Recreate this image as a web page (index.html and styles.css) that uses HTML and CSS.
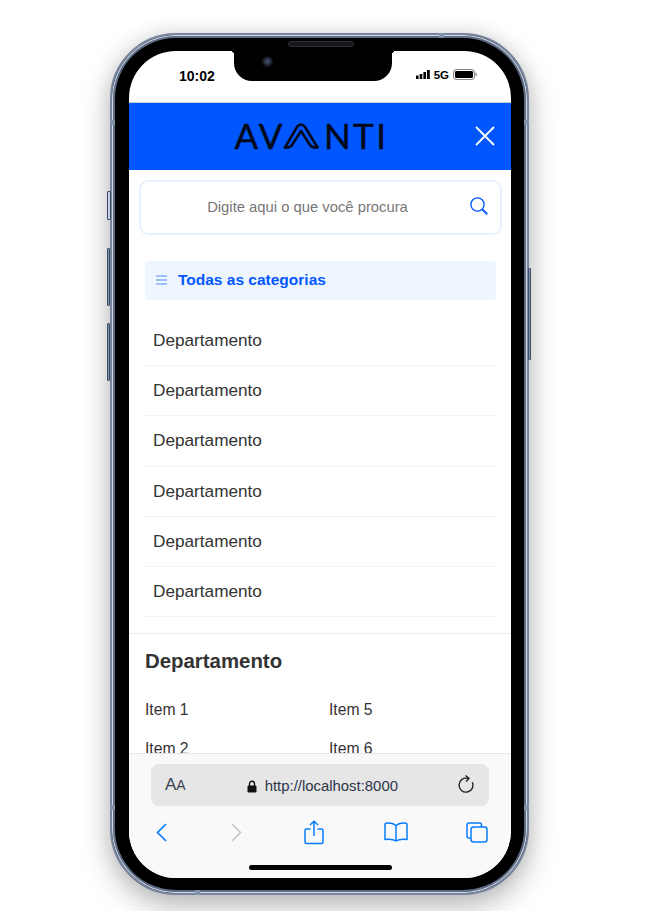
FILE: index.html
```html
<!DOCTYPE html>
<html lang="pt-BR">
<head>
    <meta charset="utf-8">
    <title>Avanti - menu mobile</title>
    <link rel="stylesheet" href="styles.css">
</head>
<body>
    <div class="phone">
        <span class="side-btn btn-mute"></span>
        <span class="side-btn btn-vol-up"></span>
        <span class="side-btn btn-vol-down"></span>
        <span class="side-btn btn-power"></span>
        <span class="band band-lt"></span>
        <span class="band band-rt"></span>
        <span class="band band-lb"></span>
        <span class="band band-rb"></span>
        <span class="band band-top"></span>
        <span class="band band-bottom"></span>
        <span class="speaker"></span>

        <div class="screen">
            <div class="notch"><span class="camera"></span></div>

            <div class="status-bar">
                <span class="time">10:02</span>
                <div class="status-icons">
                    <svg width="14" height="9" viewBox="0 0 14 9"><rect x="0" y="5.5" width="2.6" height="3.5" /><rect x="3.7" y="4" width="2.6" height="5" /><rect x="7.4" y="2" width="2.6" height="7" /><rect x="11" y="0" width="2.8" height="9" /></svg>
                    <span class="net">5G</span>
                    <svg width="24" height="11" viewBox="0 0 24 11"><rect x="0.5" y="0.5" width="21" height="10" rx="2.5" fill="#fff" stroke="#888" /><rect x="2" y="2" width="18" height="7" rx="1.2" /><rect x="22.4" y="3.8" width="1.2" height="3.4" fill="#888" /></svg>
                </div>
            </div>

            <header class="top-bar">
                <div class="logo">
                    <span>AV</span>
                    <svg class="logo-a" width="37" height="26" viewBox="0 0 37 26" fill="none" stroke="#050a1c" stroke-width="2.6" stroke-linecap="round" stroke-linejoin="round">
                        <path d="M2 24.5 L14 4 Q18 -1 22 4 L34.5 24.5" />
                        <path d="M2 24.5 Q7 25 9 22 L18 8 L27 22 Q29 25 34.5 24.5" />
                    </svg>
                    <span>NTI</span>
                </div>
                <svg class="close-icon" width="20" height="20" viewBox="0 0 20 20" stroke="#fff" stroke-width="1.8"><path d="M1 1 L19 19 M19 1 L1 19" /></svg>
            </header>

            <main class="content">
                <div class="search">
                    <span class="search-text">Digite aqui o que você procura</span>
                    <svg class="search-icon" width="18" height="18" viewBox="0 0 18 18" fill="none" stroke="#0b5cff" stroke-width="1.4"><circle cx="7.5" cy="7.5" r="6.6" /><path d="M12.2 12.2 L17.2 17.2" stroke-width="2" /></svg>
                </div>

                <div class="all-cats">
                    <svg width="11" height="10" viewBox="0 0 11 10" fill="#9cbfff"><rect y="0" width="11" height="2" /><rect y="4" width="11" height="2" /><rect y="8" width="11" height="2" /></svg>
                    <span>Todas as categorias</span>
                </div>

                <ul class="dept-list">
                    <li>Departamento</li>
                    <li>Departamento</li>
                    <li>Departamento</li>
                    <li>Departamento</li>
                    <li>Departamento</li>
                    <li>Departamento</li>
                </ul>

                <section class="dept-detail">
                    <h2>Departamento</h2>
                    <ul class="item-grid">
                        <li>Item 1</li>
                        <li>Item 5</li>
                        <li>Item 2</li>
                        <li>Item 6</li>
                    </ul>
                </section>
            </main>

            <footer class="safari">
                <div class="url-bar">
                    <span class="aa">A<small>A</small></span>
                    <div class="url">
                        <svg width="10" height="13" viewBox="0 0 10 13"><path d="M2.5 6 V3.8 a2.5 2.5 0 0 1 5 0 V6" fill="none" stroke="#111" stroke-width="1.4" /><rect x="0.5" y="5.5" width="9" height="7" rx="1.2" fill="#111" /></svg>
                        <span>http://localhost:8000</span>
                    </div>
                    <svg width="18" height="20" viewBox="0 0 18 20" fill="none" stroke="#222" stroke-width="1.4"><path d="M11 3.4 A7 7 0 1 0 15.4 7.2" /><path d="M8.5 0.5 L12 3.4 L9 6.6" /></svg>
                </div>
                <nav class="tool-row">
                    <svg width="11" height="19" viewBox="0 0 11 19" fill="none" stroke="#0a7bff" stroke-width="1.7"><path d="M10 1 L1.5 9.5 L10 18" /></svg>
                    <svg class="tool-fwd" width="11" height="19" viewBox="0 0 11 19" fill="none" stroke="#c9c9c9" stroke-width="1.7"><path d="M1 1 L9.5 9.5 L1 18" /></svg>
                    <svg class="tool-share" width="20" height="25" viewBox="0 0 20 25" fill="none" stroke="#0a7bff" stroke-width="1.5"><path d="M6.5 9 H2.5 a1.5 1.5 0 0 0 -1.5 1.5 V22 a1.5 1.5 0 0 0 1.5 1.5 H17.5 a1.5 1.5 0 0 0 1.5 -1.5 V10.5 a1.5 1.5 0 0 0 -1.5 -1.5 H13.5" /><path d="M10 16 V1.5 M6 5 L10 1.2 L14 5" /></svg>
                    <svg class="tool-book" width="24" height="20" viewBox="0 0 24 20" fill="none" stroke="#0a7bff" stroke-width="1.5" stroke-linejoin="round"><path d="M12 4 C10 1.5 6 0.8 2 1.2 Q1 1.3 1 2.5 L1 17.5 C5 17 9 17 12 19 C15 17 19 17 23 17.5 L23 2.5 Q23 1.3 22 1.2 C18 0.8 14 1.5 12 4 Z M12 4 V19" /></svg>
                    <svg class="tool-tabs" width="22" height="21" viewBox="0 0 22 21" fill="none" stroke="#0a7bff" stroke-width="1.5"><path d="M4.5 16 H3 a2 2 0 0 1 -2 -2 V3 a2 2 0 0 1 2 -2 H13.5 a2 2 0 0 1 2 2 V5" /><rect x="5" y="5" width="16" height="15" rx="2.5" /></svg>
                </nav>
                <span class="home-bar"></span>
            </footer>
        </div>
    </div>
</body>
</html>
```

FILE: styles.css
```css
* {box-sizing: border-box;}
html, body {margin: 0; height: 911px; overflow: hidden;}
body {background-color: #fff; font-family: "Liberation Sans", Arial, sans-serif; padding: 33px 0 0 110px;}
ul {list-style: none; margin: 0; padding: 0;}

.phone {
    position: relative;
    width: 419px;
    height: 862px;
    padding: 16px 16px 15px 17px;
    border-radius: 66px;
    background: #000;
    border: 1px solid #76859c;
    border-width: 2px;
    box-shadow: inset 0 0 0 1px #d4dbe6, inset 0 0 0 3px #5b6b84, 0 12px 30px rgba(0, 0, 0, .25), 0 0 20px rgba(0, 0, 0, .1);
}
.side-btn {
    position: absolute;
    left: -5px;
    width: 3px;
    background: #8497b5;
    border: 1px solid #3c4a60;
    border-radius: 1px;
}
.btn-mute {top: 156px; height: 29px; width: 4px; background: #c3d0e3;}
.btn-vol-up {top: 213px; height: 58px;}
.btn-vol-down {top: 288px; height: 58px;}
.btn-power {left: auto; right: -4px; top: 233px; height: 92px;}
.band {position: absolute; width: 5px; height: 5px; background: #8393ab;}
.band-lt {left: -2px; top: 85px;}
.band-rt {right: -2px; top: 85px;}
.band-lb {left: -2px; top: 770px;}
.band-rb {right: -2px; top: 770px;}
.band-top {right: 83px; top: -2px;}
.band-bottom {left: 83px; bottom: -2px;}
.speaker {
    position: absolute;
    top: 6px;
    left: 176px;
    width: 66px;
    height: 6px;
    border-radius: 3px;
    background: #15171b;
    border: 1px solid #2b2e33;
    z-index: 3;
}

.screen {
    position: relative;
    display: flex;
    flex-direction: column;
    height: 100%;
    overflow: hidden;
    background: #fff;
    border-radius: 47px;
}
.notch {
    position: absolute;
    top: 0;
    left: 105px;
    width: 158px;
    height: 30px;
    background: #000;
    border-radius: 0 0 18px 18px;
    z-index: 2;
}
.notch::before, .notch::after {
    content: "";
    position: absolute;
    top: 0;
    width: 4px;
    height: 4px;
}
.notch::before {left: -4px; background: radial-gradient(circle at 0 100%, transparent 4px, #000 4px);}
.notch::after {right: -4px; background: radial-gradient(circle at 100% 100%, transparent 4px, #000 4px);}
.camera {
    position: absolute;
    top: 5px;
    left: 28px;
    width: 11px;
    height: 11px;
    border-radius: 50%;
    background: radial-gradient(circle, #3d4a66 15%, #11141b 60%);
}

.status-bar {
    display: flex;
    justify-content: space-between;
    align-items: center;
    flex: none;
    height: 52px;
    padding: 0 34px 0 50px;
    border-bottom: 1px solid #ccc;
}
.time {margin-top: -1px; font-size: 14px; font-weight: bold; color: #000;}
.status-icons {display: flex; align-items: center; gap: 4px; margin-top: -4px;}
.net {font-size: 11.5px; font-weight: bold; color: #000;}

.top-bar {
    position: relative;
    display: flex;
    justify-content: center;
    align-items: center;
    flex: none;
    height: 67px;
    background: #0057ff;
}
.logo {
    display: flex;
    align-items: center;
    gap: 1px;
    margin-left: -17px;
    margin-top: -2px;
    font-family: Lato, sans-serif;
    font-size: 35px;
    line-height: 1;
    letter-spacing: 2.5px;
    color: #050a1c;
    -webkit-text-stroke: .5px #050a1c;
}
.logo-a {margin: 0 3px 0 -3px;}
.close-icon {position: absolute; right: 16px; top: 23px;}

.content {flex: 1; min-height: 0; overflow: hidden;}

.search {
    position: relative;
    display: flex;
    justify-content: center;
    align-items: center;
    height: 55px;
    margin: 10px 9px 0 10px;
    padding-bottom: 2px;
    border: 2px solid #e9f0ff;
    border-radius: 9px;
    font-size: 14.8px;
    color: #777;
}
.search-text {margin-right: 26px;}
.search-icon {position: absolute; right: 12px; top: 15px;}

.all-cats {
    display: flex;
    align-items: center;
    gap: 11px;
    height: 39px;
    margin: 26px 15px 0 16px;
    padding-left: 11px;
    padding-bottom: 1px;
    background: #f0f6ff;
    border-radius: 4px;
    font-size: 15.5px;
    font-weight: bold;
    color: #0057ff;
}

.dept-list {margin: 15.7px 15px 0 16px;}
.dept-list li {
    display: flex;
    align-items: center;
    height: 50.3px;
    padding-left: 8px;
    border-bottom: 1px solid #f2f2f2;
    font-size: 17.2px;
    color: #333;
}

.dept-detail {
    margin-top: 15.3px;
    padding: 16px 16px 0;
    border-top: 1px solid #ececec;
}
.dept-detail h2 {margin: 0; font-size: 20.4px; line-height: 23px; color: #333;}
.item-grid {
    display: grid;
    grid-template-columns: 184px 1fr;
    row-gap: 21px;
    margin-top: 28px;
    font-size: 15.7px;
    line-height: 18px;
    color: #333;
}

.safari {
    position: relative;
    flex: none;
    height: 125px;
    padding: 10px 22px 0;
    background: #f9f9f9;
    border-top: 1px solid #e6e6e6;
}
.url-bar {
    display: flex;
    justify-content: space-between;
    align-items: center;
    height: 42px;
    padding: 0 14px;
    background: #e6e6e6;
    border-radius: 8px;
}
.aa {font-size: 17px; color: #3a4252;}
.aa small {font-size: 14px;}
.url {display: flex; align-items: center; gap: 8px; margin: 2px 0 0 2px; font-size: 14.9px; color: #2c3648;}
.tool-row {
    display: flex;
    align-items: center;
    height: 32px;
    margin: 10px 0 0 5px;
}
.tool-fwd {margin-left: 64px;}
.tool-share {margin-left: 62px;}
.tool-book {margin-left: 60px;}
.tool-tabs {margin-left: 58px;}
.home-bar {
    position: absolute;
    left: 120px;
    bottom: 8px;
    width: 143px;
    height: 5px;
    border-radius: 3px;
    background: #000;
}
```
